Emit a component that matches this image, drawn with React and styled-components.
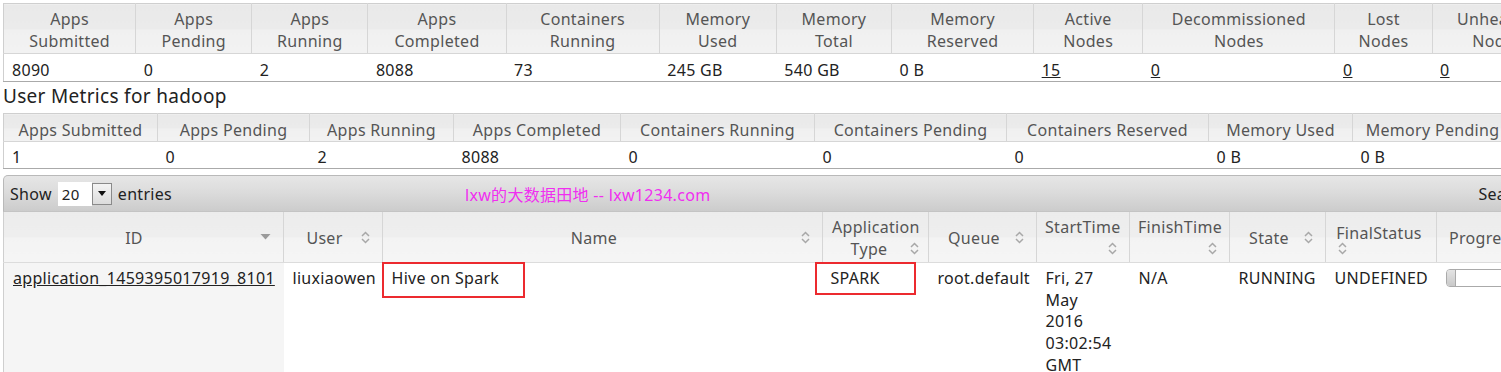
import styled, { createGlobalStyle } from "styled-components";

const GlobalStyle = createGlobalStyle`
  html, body {
    margin: 0;
    padding: 0;
    overflow: hidden;
    background: #fff;
  }
  body {
    font-family: "Noto Sans", "Noto Sans CJK SC", sans-serif;
    font-size: 16px;
    letter-spacing: 0.3px;
    color: #222;
  }
`;

const Page = styled.div`
  padding: 3px 0 0 3px;
  width: 1700px;
`;

const MetricsTable = styled.table`
  border-collapse: collapse;
  table-layout: fixed;
  width: ${(p) => p.$width}px;
  border-top: 1px solid #cfcfcf;
  border-left: 1px solid #cfcfcf;
  border-bottom: 1px solid #aaa;
`;

const MetricHead = styled.th`
  font-weight: normal;
  color: #555;
  text-align: center;
  line-height: 22px;
  padding: ${(p) => (p.$tall ? "4px 6px 1px" : "5px 6px 0")};
  border-right: 1px solid #d6d6d6;
  border-bottom: 1px solid #d6d6d6;
  background: linear-gradient(#e9e9e9 0%, #ebebeb 50%, #f0f0f0 52%, #f2f2f2 100%);
  white-space: nowrap;
  overflow: hidden;
`;

const MetricCell = styled.td`
  line-height: 22px;
  padding: ${(p) => (p.$pad ? p.$pad : "5px 8px 0")};
  color: #222;
  white-space: nowrap;
  overflow: hidden;
`;

const Link = styled.a`
  color: #222;
  text-decoration: underline;
`;

const Title = styled.div`
  font-size: 19px;
  line-height: 28px;
  color: #222;
  padding-bottom: 3px;
`;

const Toolbar = styled.div`
  margin-top: 6px;
  height: 35px;
  display: flex;
  align-items: center;
  padding: 0 6px;
  border: 1px solid #b9b9b9;
  border-bottom: 1px solid #c4c4c4;
  border-radius: 5px 0 0 0;
  background: linear-gradient(#e6e6e6 0%, #dcdcdc 45%, #cccccc 100%);
  color: #222;
  white-space: nowrap;
`;

const SelectBox = styled.div`
  display: inline-flex;
  align-items: center;
  margin: 0 6px 0 6px;
  height: 22px;
`;

const SelectValue = styled.span`
  background: #fff;
  width: 34px;
  height: 24px;
  line-height: 24px;
  padding-left: 4px;
  box-sizing: border-box;
  font-size: 15px;
`;

const DropButton = styled.span`
  width: 18px;
  height: 20px;
  border: 1px solid #8a8a8a;
  background: linear-gradient(#f4f4f4, #dcdcdc);
  display: flex;
  align-items: center;
  justify-content: center;
  &::after {
    content: "";
    border-left: 4px solid transparent;
    border-right: 4px solid transparent;
    border-top: 5px solid #111;
  }
`;

const Watermark = styled.span`
  color: #f02ef0;
  margin-left: 293px;
  flex: none;
`;

const SearchLabel = styled.span`
  margin-left: 768px;
  flex: none;
`;

const AppsTable = styled.table`
  border-collapse: collapse;
  table-layout: fixed;
  width: 1560px;
  border-left: 1px solid #cfcfcf;
`;

const AppHead = styled.th`
  font-weight: normal;
  color: #555;
  line-height: 22px;
  padding: ${(p) => p.$pad || "4px 12px 2px 8px"};
  height: 44px;
  border-right: 1px solid #d6d6d6;
  border-bottom: 1px solid #dcdcdc;
  background: linear-gradient(#ececec 0%, #eeeeee 50%, #f3f3f3 52%, #f5f5f5 100%);
  vertical-align: middle;
  overflow: hidden;
`;

const HeadInner = styled.div`
  display: flex;
  flex-wrap: wrap;
  align-items: center;
`;

const HeadLine = styled.span`
  flex: ${(p) => (p.$full ? "0 0 100%" : "1")};
  min-height: 22px;
  text-align: ${(p) => (p.$left ? "left" : "center")};
  padding-left: ${(p) => (p.$left ? "4px" : "0")};
  white-space: nowrap;
`;

const SortIcon = styled.svg`
  flex: none;
  margin-left: 4px;
  margin-top: ${(p) => (p.$lifted ? "-3px" : "-2px")};
`;

const AppCell = styled.td`
  vertical-align: top;
  line-height: 21.7px;
  padding: 5px 9px 40px;
  color: #222;
  background: ${(p) => (p.$sorted ? "#f5f5f5" : "#fff")};
  white-space: nowrap;
  overflow: visible;
`;

const DateLines = styled.span`
  display: block;
  width: 66px;
  white-space: normal;
`;

const HighlightBox = styled.span`
  display: inline-block;
  border: 2px solid #ec2a2f;
  padding: ${(p) => p.$pad};
  margin: ${(p) => p.$margin};
  line-height: 21.7px;
`;

const ProgressBar = styled.div`
  width: 120px;
  height: 16px;
  margin-top: 1px;
  border: 1px solid #aaa;
  border-radius: 4px;
  background: #fff;
  overflow: hidden;
  display: flex;
`;

const ProgressFill = styled.div`
  width: 8px;
  background: linear-gradient(#e4e4e4, #c9c9c9);
  border-right: 1px solid #aaa;
`;

const clusterHeads = [
  ["Apps", "Submitted", 132],
  ["Apps", "Pending", 116],
  ["Apps", "Running", 116],
  ["Apps", "Completed", 138],
  ["Containers", "Running", 153],
  ["Memory", "Used", 117],
  ["Memory", "Total", 115],
  ["Memory", "Reserved", 142],
  ["Active", "Nodes", 109],
  ["Decommissioned", "Nodes", 192],
  ["Lost", "Nodes", 97],
  ["Unhealthy", "Nodes", 130],
  ["Rebooted", "Nodes", 130],
];

const clusterValues = [
  ["8090"], ["0"], ["2"], ["8088"], ["73"], ["245 GB"], ["540 GB"], ["0 B"],
  ["15", true], ["0", true], ["0", true], ["0", true], ["0", true],
];

const userHeads = [
  ["Apps Submitted", 154],
  ["Apps Pending", 152],
  ["Apps Running", 144],
  ["Apps Completed", 167],
  ["Containers Running", 194],
  ["Containers Pending", 192],
  ["Containers Reserved", 202],
  ["Memory Used", 144],
  ["Memory Pending", 160],
];

const userValues = ["1", "0", "2", "8088", "0", "0", "0", "0 B", "0 B"];

const Sort = () => (
  <SortIcon width="9" height="13" viewBox="0 0 9 13">
    <path d="M1 5 L4.5 1.5 L8 5" fill="none" stroke="#a8a8a8" strokeWidth="1.5" />
    <path d="M1 8 L4.5 11.5 L8 8" fill="none" stroke="#a8a8a8" strokeWidth="1.5" />
  </SortIcon>
);

const SortDesc = () => (
  <SortIcon width="11" height="8" viewBox="0 0 11 8" $lifted>
    <path d="M0.5 1 L10.5 1 L5.5 6.5 Z" fill="#9a9a9a" />
  </SortIcon>
);

const appColumns = [
  { lines: ["ID"], width: 280, icon: "desc" },
  { lines: ["User"], width: 99 },
  { lines: ["Name"], width: 440 },
  { lines: ["Application", "Type"], width: 106, pad: "4px 9px 2px 9px" },
  { lines: ["Queue"], width: 108 },
  { lines: ["StartTime", ""], width: 93 },
  { lines: ["FinishTime", ""], width: 100 },
  { lines: ["State"], width: 96 },
  { lines: ["FinalStatus", ""], width: 111 },
  { lines: ["Progress"], width: 127, icon: "none", left: true },
];

const AppHeader = ({ col }) => {
  const first = col.lines.slice(0, -1);
  const last = col.lines[col.lines.length - 1];
  return (
    <AppHead $pad={col.pad}>
      <HeadInner>
        {first.map((t, i) => (
          <HeadLine key={i} $full>
            {t}
          </HeadLine>
        ))}
        <HeadLine $left={col.left}>{last}</HeadLine>
        {col.icon === "desc" ? <SortDesc /> : col.icon === "none" ? null : <Sort />}
      </HeadInner>
    </AppHead>
  );
};

export default function App() {
  return (
    <Page>
      <GlobalStyle />
      <MetricsTable $width={1690}>
        <colgroup>
          {clusterHeads.map(([, , w], i) => (
            <col key={i} style={{ width: w }} />
          ))}
        </colgroup>
        <thead>
          <tr>
            {clusterHeads.map(([a, b], i) => (
              <MetricHead key={i} $tall>
                {a}
                <br />
                {b}
              </MetricHead>
            ))}
          </tr>
        </thead>
        <tbody>
          <tr>
            {clusterValues.map(([v, link], i) => (
              <MetricCell key={i}>{link ? <Link>{v}</Link> : v}</MetricCell>
            ))}
          </tr>
        </tbody>
      </MetricsTable>

      <Title>User Metrics for hadoop</Title>

      <MetricsTable $width={1509}>
        <colgroup>
          {userHeads.map(([, w], i) => (
            <col key={i} style={{ width: w }} />
          ))}
        </colgroup>
        <thead>
          <tr>
            {userHeads.map(([h], i) => (
              <MetricHead key={i}>{h}</MetricHead>
            ))}
          </tr>
        </thead>
        <tbody>
          <tr>
            {userValues.map((v, i) => (
              <MetricCell key={i} $pad="4px 8px 0">
                {v}
              </MetricCell>
            ))}
          </tr>
        </tbody>
      </MetricsTable>

      <Toolbar>
        Show
        <SelectBox>
          <SelectValue>20</SelectValue>
          <DropButton />
        </SelectBox>
        entries
        <Watermark>lxw的大数据田地 -- lxw1234.com</Watermark>
        <SearchLabel>Search:</SearchLabel>
      </Toolbar>

      <AppsTable>
        <colgroup>
          {appColumns.map((c, i) => (
            <col key={i} style={{ width: c.width }} />
          ))}
        </colgroup>
        <thead>
          <tr>
            {appColumns.map((c, i) => (
              <AppHeader key={i} col={c} />
            ))}
          </tr>
        </thead>
        <tbody>
          <tr>
            <AppCell $sorted>
              <Link>application_1459395017919_8101</Link>
            </AppCell>
            <AppCell>liuxiaowen</AppCell>
            <AppCell>
              <HighlightBox $pad="4px 24px 6px 8px" $margin="-6px 0 0 -10px">
                Hive on Spark
              </HighlightBox>
            </AppCell>
            <AppCell>
              <HighlightBox $pad="4px 34px 3px 14px" $margin="-6px 0 0 -17px">
                SPARK
              </HighlightBox>
            </AppCell>
            <AppCell>root.default</AppCell>
            <AppCell>
              <DateLines>Fri, 27 May 2016 03:02:54 GMT</DateLines>
            </AppCell>
            <AppCell>N/A</AppCell>
            <AppCell>RUNNING</AppCell>
            <AppCell>UNDEFINED</AppCell>
            <AppCell>
              <ProgressBar>
                <ProgressFill />
              </ProgressBar>
            </AppCell>
          </tr>
        </tbody>
      </AppsTable>
    </Page>
  );
}
